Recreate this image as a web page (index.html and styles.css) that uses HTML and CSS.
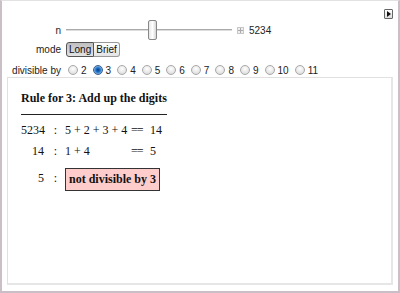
FILE: index.html
```html
<!DOCTYPE html>
<html>
<head>
<meta charset="utf-8">
<link rel="stylesheet" href="styles.css">
</head>
<body>
<div class="frame">
  <div class="disclosure"><span class="tri"></span></div>
  <div class="controls">
    <div class="row r1">
      <div class="label">n</div>
      <div class="ctl">
        <div class="slider"><div class="track"></div><div class="thumb"></div></div>
        <span class="plus"></span>
        <span class="val">5234</span>
      </div>
    </div>
    <div class="row r2">
      <div class="label">mode</div>
      <div class="ctl">
        <span class="btn on">Long</span><span class="btn">Brief</span>
      </div>
    </div>
    <div class="row r3">
      <div class="label">divisible by</div>
      <div class="ctl radios">
        <span class="opt"><span class="radio"></span>2</span>
        <span class="opt"><span class="radio sel"></span>3</span>
        <span class="opt"><span class="radio"></span>4</span>
        <span class="opt"><span class="radio"></span>5</span>
        <span class="opt"><span class="radio"></span>6</span>
        <span class="opt"><span class="radio"></span>7</span>
        <span class="opt"><span class="radio"></span>8</span>
        <span class="opt"><span class="radio"></span>9</span>
        <span class="opt"><span class="radio"></span>10</span>
        <span class="opt"><span class="radio"></span>11</span>
      </div>
    </div>
  </div>
  <div class="panel">
    <div class="title">Rule for 3: Add up the digits</div>
    <div class="rule"></div>
    <div class="grid">
      <div class="c1">5234</div><div class="c2">:</div><div class="c3">5 + 2 + 3 + 4</div><div class="c4">==</div><div class="c5">14</div>
      <div class="c1">14</div><div class="c2">:</div><div class="c3">1 + 4</div><div class="c4">==</div><div class="c5">5</div>
      <div class="c1 last">5</div><div class="c2 last">:</div><div class="c3 span last"><span class="result">not divisible by 3</span></div>
    </div>
  </div>
</div>
</body>
</html>
```
FILE: styles.css
```css
html, body { margin: 0; padding: 0; background: #fff; }
.frame {
  position: relative;
  width: 400px; height: 293px; box-sizing: border-box;
  border-top: 1px solid #e2e2e2;
  border-left: 2px solid #cbbfc7;
  border-right: 2px solid #cbbfc7;
  border-bottom: 2px solid #cbbfc7;
  display: flex; flex-direction: column;
  font-family: "Liberation Sans", Arial, sans-serif;
  font-size: 10px; color: #222;
}
.disclosure {
  position: absolute; left: 382px; top: 8px;
  width: 7px; height: 8px;
  border: 1px solid #666; border-radius: 1px;
  background: linear-gradient(#fff, #ddd);
}
.tri {
  position: absolute; left: 2px; top: 1px;
  width: 0; height: 0;
  border-left: 4px solid #111;
  border-top: 3px solid transparent;
  border-bottom: 3px solid transparent;
}
.controls { padding-top: 18px; display: flex; flex-direction: column; }
.row { display: flex; align-items: center; }
.r1 { height: 22px; }
.r2 { height: 15px; margin-top: 1px; }
.r3 { height: 14px; margin-top: 6px; }
.label { width: 64px; text-align: right; padding-right: 5px; box-sizing: border-box; flex: none; }
.ctl { display: flex; align-items: center; }
.slider { position: relative; width: 166px; height: 20px; }
.track { position: absolute; left: 0; right: 0; top: 9px; height: 1px; background: #aaa; border-bottom: 1px solid #ddd; }
.thumb {
  position: absolute; left: 82px; top: 0; width: 7px; height: 18px;
  border: 1px solid #888; border-radius: 2px;
  background: linear-gradient(90deg, #e6e6e6, #fff 50%, #d6d6d6);
}
.plus {
  position: relative; width: 5px; height: 5px; margin-left: 5px;
  border: 1px solid #c8c8c8; background: #eee;
}
.plus::before { content: ""; position: absolute; left: 2px; top: 0; width: 1px; height: 5px; background: #aaa; }
.plus::after { content: ""; position: absolute; left: 0; top: 2px; width: 5px; height: 1px; background: #aaa; }
.val { margin-left: 5px; }
.btn {
  display: inline-block; height: 15px; line-height: 14px; box-sizing: border-box;
  padding: 0 2px; border: 1px solid #999;
  background: linear-gradient(#fefefe, #e4e4e4);
  color: #111;
}
.btn.on {
  border-color: #555; border-radius: 3px 0 0 3px;
  background: linear-gradient(#bfbfbf, #e2e2e2);
}
.btn:last-child { border-left: none; border-radius: 0 3px 3px 0; }
.radios { padding-left: 2px; }
.opt { display: inline-flex; align-items: center; margin-right: 6px; }
.radio {
  width: 8px; height: 8px; border-radius: 50%; margin-right: 3px;
  border: 1px solid #a8a8a8;
  background: radial-gradient(circle at 50% 35%, #fff, #d4d4d4);
}
.radio.sel {
  border-color: #3a5f8a;
  background: radial-gradient(circle, #0a3a7a 0, #1a6ec8 2px, #7fb0e0 4px, #b8d4ee 5px);
}
.panel {
  flex: 1;
  margin: 0 5px 6px 5px;
  border: 1px solid #e0e0e0;
  border-right: 2px solid #e6e6e6;
  border-bottom: 2px solid #e6e6e6;
  padding: 13px 0 0 13px;
  font-family: "Liberation Serif", "Times New Roman", serif;
  color: #111;
}
.title { font-weight: bold; font-size: 12px; line-height: 15px; }
.rule { width: 146px; height: 1px; background: #222; margin-top: 8px; }
.grid {
  display: grid;
  grid-template-columns: 23px 21px 66px 19px auto;
  font-size: 12px; line-height: 21px;
  margin-top: 5px;
}
.c1 { text-align: right; }
.c2 { text-align: center; padding-left: 2px; }
.c4 { letter-spacing: -1px; }
.span { grid-column: 3 / 6; }
.last { margin-top: 6px; }
.result {
  display: inline-block; font-weight: bold; font-size: 12px;
  background: #ffcccc; border: 1px solid #333;
  padding: 3px 3px 3px 3px; line-height: 15px;
}
```
